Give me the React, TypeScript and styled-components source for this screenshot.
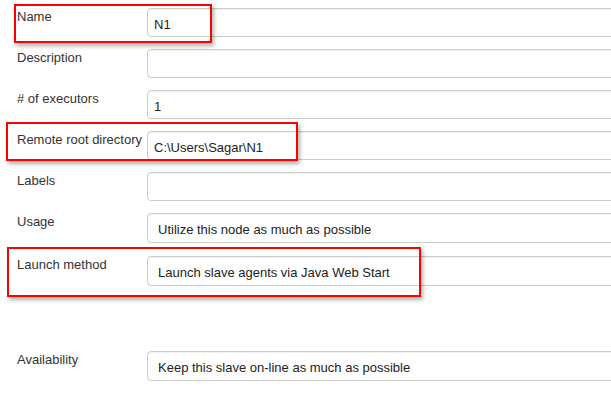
import styled, { createGlobalStyle } from "styled-components";

const GlobalStyle = createGlobalStyle`
    html, body {
        margin: 0;
        padding: 0;
        background: #fff;
        overflow: hidden;
    }
    body {
        font-family: Arial, "Liberation Sans", sans-serif;
        font-size: 13px;
        color: #333;
    }
`;

const Form = styled.div`
    display: flex;
    flex-direction: column;
    gap: 12px;
    padding-top: 8px;
    width: 611px;
    overflow: hidden;
`;

const Row = styled.div<{ $extraTop?: number }>`
    position: relative;
    display: flex;
    align-items: flex-start;
    margin-top: ${(p) => p.$extraTop ?? 0}px;
`;

const Label = styled.div`
    width: 130px;
    padding-left: 17px;
    padding-top: 1px;
    flex-shrink: 0;
    color: #333;
    line-height: 15px;
`;

const Input = styled.div`
    box-sizing: border-box;
    flex-shrink: 0;
    width: 520px;
    height: 29px;
    border: 1px solid #ccc;
    border-radius: 4px;
    box-shadow: inset 0 1px 1px rgba(0, 0, 0, 0.06);
    padding: 0 6px;
    display: flex;
    align-items: center;
    color: #222;
    font-size: 13px;
    padding-top: 3px;
`;

const Select = styled(Input)`
    height: 30px;
    padding-left: 10px;
`;

const Highlight = styled.div<{ $top: number; $left: number; $width: number; $height: number }>`
    position: absolute;
    top: ${(p) => p.$top}px;
    left: ${(p) => p.$left}px;
    width: ${(p) => p.$width}px;
    height: ${(p) => p.$height}px;
    box-sizing: border-box;
    border: 2px solid #f00;
    box-shadow: 2px 3px 4px rgba(0, 0, 0, 0.3);
    pointer-events: none;
`;

const App = () => {
    return (
        <>
            <GlobalStyle />
            <Form>
                <Row>
                    <Label>Name</Label>
                    <Input>N1</Input>
                    <Highlight $top={-4} $left={14} $width={198} $height={39} />
                </Row>
                <Row>
                    <Label>Description</Label>
                    <Input />
                </Row>
                <Row>
                    <Label># of executors</Label>
                    <Input>1</Input>
                </Row>
                <Row>
                    <Label>Remote root directory</Label>
                    <Input>C:\Users\Sagar\N1</Input>
                    <Highlight $top={-9} $left={6} $width={292} $height={39} />
                </Row>
                <Row>
                    <Label>Labels</Label>
                    <Input />
                </Row>
                <Row>
                    <Label>Usage</Label>
                    <Select>Utilize this node as much as possible</Select>
                </Row>
                <Row $extraTop={1}>
                    <Label>Launch method</Label>
                    <Select>Launch slave agents via Java Web Start</Select>
                    <Highlight $top={-9} $left={7} $width={414} $height={50} />
                </Row>
                <Row $extraTop={53}>
                    <Label>Availability</Label>
                    <Select>Keep this slave on-line as much as possible</Select>
                </Row>
            </Form>
        </>
    );
};

export default App;
